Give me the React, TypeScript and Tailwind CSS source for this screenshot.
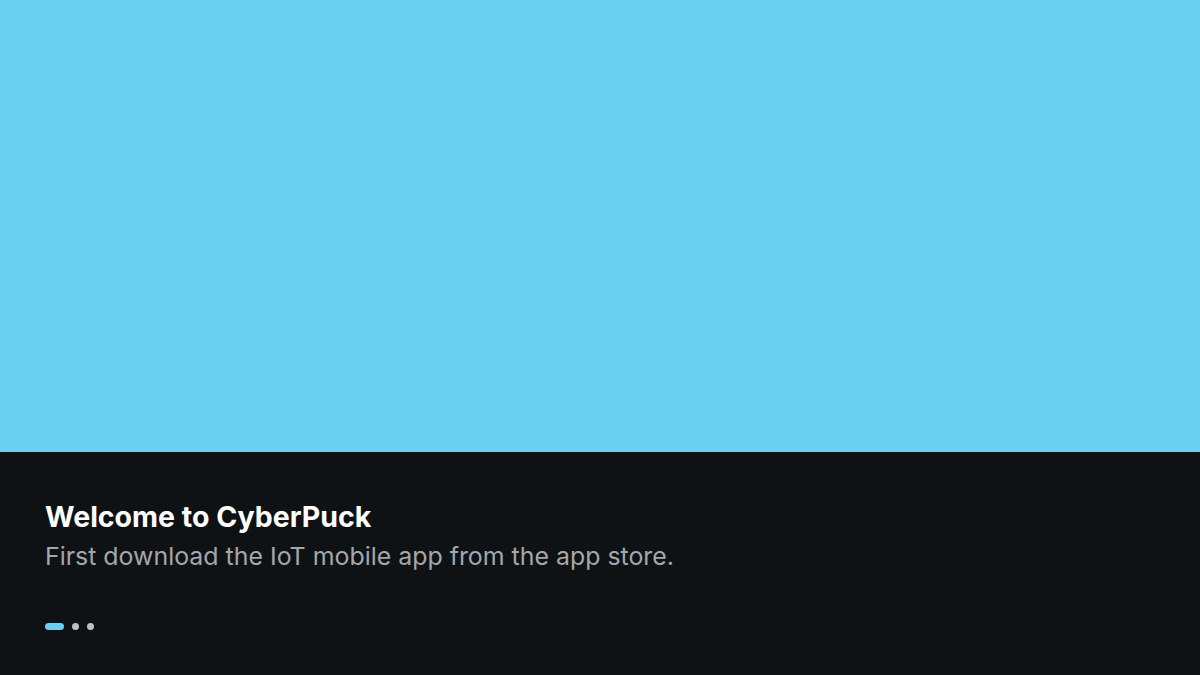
export default function App() {
  return (
    <div className="w-[1200px] h-[675px] flex flex-col bg-[#0f1215]" style={{ fontFamily: "Inter, 'Noto Sans', sans-serif" }}>
      <div className="h-[452px] bg-[#6acff0]" />
      <div className="flex-1 flex flex-col px-[45px] pt-[47px]">
        <h1 className="text-[28.5px] leading-[36px] font-bold text-white">Welcome to CyberPuck</h1>
        <p className="text-[24.9px] leading-[34px] text-[#a3a6aa] mt-[4px]">First download the IoT mobile app from the app store.</p>
        <div className="flex items-center gap-[8px] mt-[50px]">
          <span className="w-[19px] h-[7px] rounded-full bg-[#6acff0]" />
          <span className="w-[7px] h-[7px] rounded-full bg-[#c0c0c0]" />
          <span className="w-[7px] h-[7px] rounded-full bg-[#c0c0c0]" />
        </div>
      </div>
    </div>
  );
}
